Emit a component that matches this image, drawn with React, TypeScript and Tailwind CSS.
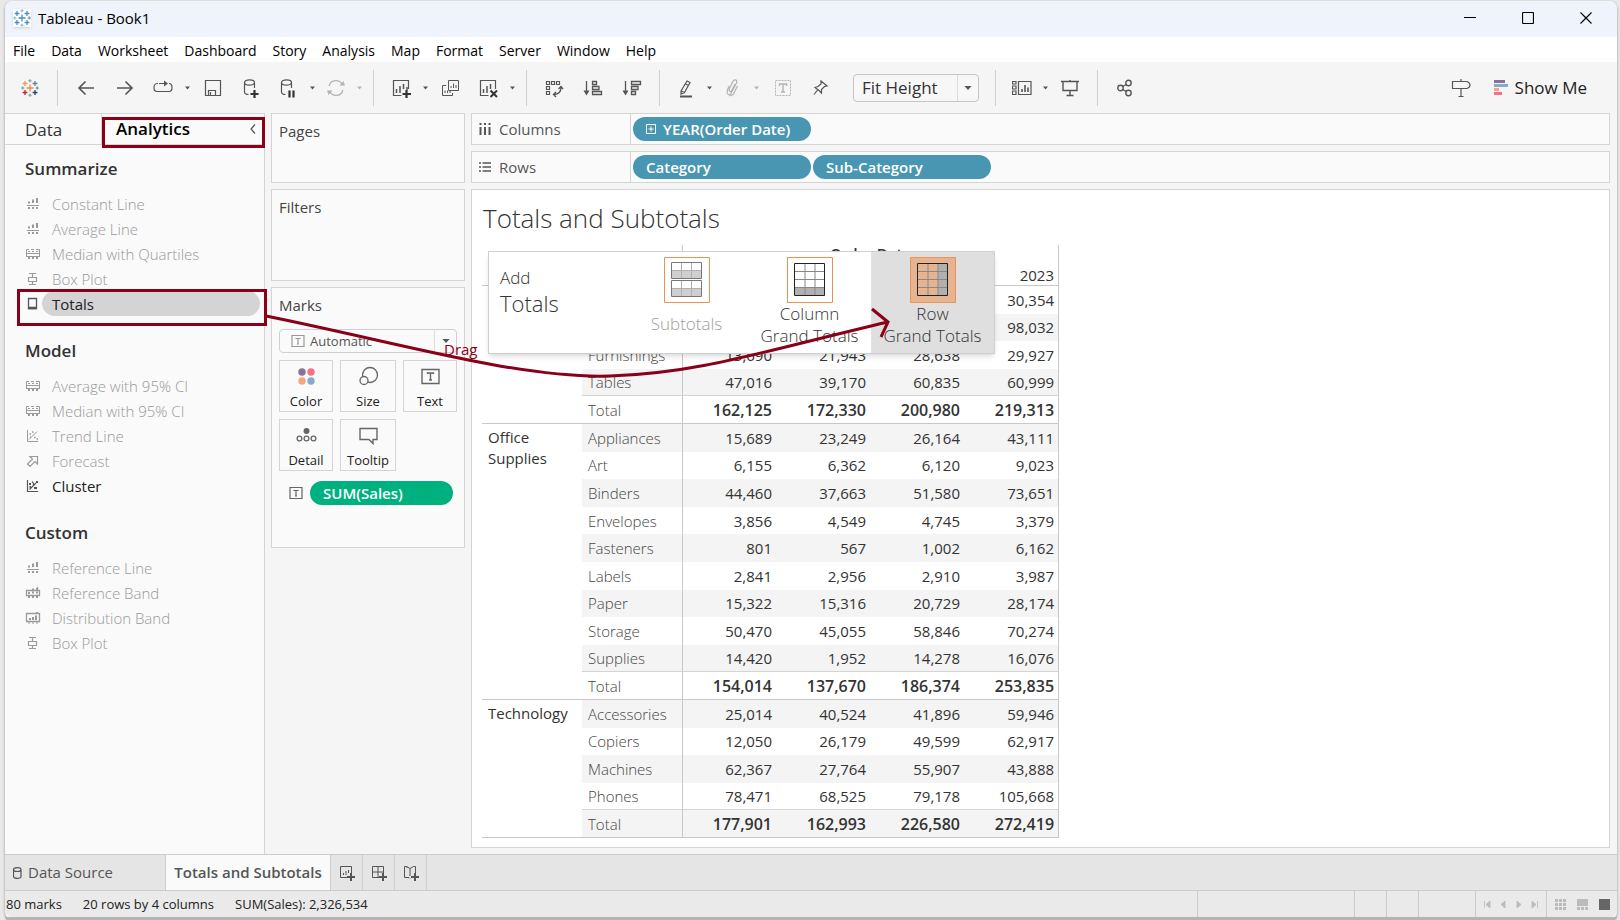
import React from "react";

type IconProps = { children: React.ReactNode; w?: number; h?: number; className?: string };

const Icon = ({ children, w = 20, h = 20, className = "" }: IconProps) => (
  <svg
    width={w}
    height={h}
    viewBox={`0 0 ${w} ${h}`}
    fill="none"
    stroke="currentColor"
    strokeWidth="1"
    className={`shrink-0 ${className}`}
    aria-hidden="true"
  >
    {children}
  </svg>
);

const Plus = ({ x, y, r, color }: { x: number; y: number; r: number; color: string }) => (
  <path d={`M${x - r} ${y}H${x + r}M${x} ${y - r}V${y + r}`} stroke={color} />
);

const Logo = ({ colors }: { colors: string[] }) => (
  <Icon w={18} h={18}>
    <g strokeWidth="1.3">
      <Plus x={9} y={9} r={3.5} color={colors[0]} />
      <Plus x={4} y={4.5} r={2.4} color={colors[1]} />
      <Plus x={14} y={4.5} r={2.4} color={colors[2]} />
      <Plus x={4} y={13.5} r={2.4} color={colors[3]} />
      <Plus x={14} y={13.5} r={2.4} color={colors[4]} />
    </g>
    <Plus x={9} y={1.8} r={1.6} color={colors[5]} />
    <Plus x={9} y={16.2} r={1.6} color={colors[5]} />
    <Plus x={1.8} y={9} r={1.6} color={colors[5]} />
    <Plus x={16.2} y={9} r={1.6} color={colors[2]} />
  </Icon>
);

type ToolProps = { label: string; muted?: boolean; narrow?: boolean; children: React.ReactNode };

const Tool = ({ label, muted, narrow, children }: ToolProps) => (
  <button
    aria-label={label}
    className={`flex h-9 shrink-0 items-center justify-center ${narrow ? "w-9" : "w-[38px]"} ${
      muted ? "text-[#b4b4b4]" : "text-[#555555]"
    }`}
  >
    {children}
  </button>
);

const Caret = ({ muted }: { muted?: boolean }) => (
  <button
    aria-label="More options"
    className={`flex h-9 w-[11px] shrink-0 items-center justify-center ${muted ? "text-[#b4b4b4]" : "text-[#555555]"}`}
  >
    <Icon w={5} h={4}>
      <path d="M0 0.5H5L2.5 3.5Z" fill="currentColor" stroke="none" />
    </Icon>
  </button>
);

const Divider = () => <div className="mx-2 h-9 w-px shrink-0 bg-[#d0d0d0]" />;

const Database = () => (
  <path d="M2.5 4.5C2.5 1 12.5 1 12.5 4.5S2.5 8 2.5 4.5V14Q2.5 16.5 6.5 16.5M12.5 4.5V10" strokeWidth="1.2" />
);

const Toolbar = () => (
  <div className="flex h-[51px] items-center bg-[#f5f5f5] pl-[6px] pr-[30px]">
    <Tool label="Start page">
      <Logo colors={["#eb8a44", "#eb9b4d", "#5b879b", "#c72037", "#1f457e", "#7199a6"]} />
    </Tool>
    <div className="flex items-center gap-px">
      <Divider />
      <Tool label="Undo">
        <Icon><path d="M18 10H3M9.500 3.500L3 10L9.500 16.500" strokeWidth="1.6" /></Icon>
      </Tool>
      <Tool label="Redo">
        <Icon><path d="M2 10H17M10.500 3.500L17 10L10.500 16.500" strokeWidth="1.6" /></Icon>
      </Tool>
      <Tool label="Replay" narrow>
        <Icon>
          <path d="M5 5.500H4C0 5.500 0 13.500 4 13.500H16C20 13.500 20 5.500 16 5.500M6 5.500H13" strokeWidth="1.2" />
          <path d="M11 2.500L15 5.500L11 8.500Z" fill="currentColor" stroke="none" />
        </Icon>
      </Tool>
      <Caret />
      <Tool label="Save">
        <Icon><path d="M2.500 2.500H17.500V17.500H2.500ZM5.500 17V12.500H12.500V17M7.500 14V17" strokeWidth="1.2" /></Icon>
      </Tool>
      <Tool label="New data source">
        <Icon>
          <Database />
          <path d="M12.500 12V20M8.500 16H16.500" stroke="#333" strokeWidth="2.200" />
        </Icon>
      </Tool>
    </div>
    <div className="flex items-center">
      <Tool label="Pause auto updates" narrow>
        <Icon>
          <Database />
          <path d="M10.500 12.500V19.500M14.500 12.500V19.500" stroke="#333" strokeWidth="2.200" />
        </Icon>
      </Tool>
      <Caret />
      <Tool label="Refresh" muted narrow>
        <Icon>
          <path d="M3 8C5 1 14 1 16.500 7M17 12C15 19 6 19 3.500 13" strokeWidth="1.300" />
          <path d="M13.500 7.500H19L17.500 3ZM6.500 12.500H1L2.500 17Z" fill="currentColor" stroke="none" />
        </Icon>
      </Tool>
      <Caret muted />
      <Divider />
      <Tool label="New worksheet">
        <Icon>
          <path d="M10.500 17.500H2.500V2.500H17.500V11" strokeWidth="1.200" />
          <path d="M5.500 15V11M9 15V8M12.500 11V6M16 12V9" strokeWidth="1.500" />
          <path d="M15.500 12V20M11.500 16H20" stroke="#333" strokeWidth="2.200" />
        </Icon>
      </Tool>
      <Caret />
      <Tool label="Duplicate">
        <Icon>
          <path d="M8.500 2.500H18.500V12.500H8.500ZM6 7.500H2.500V17.500H12.500V15" />
          <path d="M11 10V8M13.500 10V5.500M16 10V7M5 15V12.500M7.500 15V12.500M10 15V12.500" />
        </Icon>
      </Tool>
      <Tool label="Clear sheet">
        <Icon>
          <path d="M10.500 17.500H2.500V2.500H17.500V11" strokeWidth="1.200" />
          <path d="M5.500 15V11M9 15V8M12.500 11V6" strokeWidth="1.500" />
          <path d="M12.500 12.500L19 19M19 12.500L12.500 19" stroke="#333" strokeWidth="2" />
        </Icon>
      </Tool>
      <Caret />
      <Divider />
    </div>
    <div className="flex items-center gap-px">
      <Tool label="Swap rows and columns">
        <Icon>
          <path d="M2.500 3.500H5.500V6.500H2.500ZM7.500 3.500H10.500V6.500H7.500ZM12.500 3.500H15.500V6.500H12.500ZM2.500 8.500H5.500V11.500H2.500ZM2.500 13.500H5.500V16.500H2.500Z" strokeWidth="1.200" />
          <path d="M17 9.500Q17 16 10 16.500M14.500 11L17 8.500L19 11M12 14L9.500 16.500L12 19" strokeWidth="1.300" />
        </Icon>
      </Tool>
      <Tool label="Sort ascending">
        <Icon>
          <path d="M3.500 3V15M9.500 3.500H13.500V6.500H9.500ZM9.500 8.500H16V11.500H9.500ZM9.500 13.500H18.500V16.500H9.500Z" strokeWidth="1.300" />
          <path d="M0.500 12.500H6.500L3.500 17.500Z" fill="currentColor" stroke="none" />
        </Icon>
      </Tool>
      <Tool label="Sort descending">
        <Icon>
          <path d="M3.500 3V15M9.500 3.500H18.500V6.500H9.500ZM9.500 8.500H16V11.500H9.500ZM9.500 13.500H13.500V16.500H9.500Z" strokeWidth="1.300" />
          <path d="M0.500 12.500H6.500L3.500 17.500Z" fill="currentColor" stroke="none" />
        </Icon>
      </Tool>
    </div>
    <Divider />
    <div className="flex items-center">
      <Tool label="Highlight" narrow>
        <Icon>
          <path d="M5 13L11 3L14 4.500L8.500 14.500L5 16ZM5 13L8.500 14.500M9.500 6L12.500 7.500" strokeWidth="1.200" />
          <path d="M4 18.500H16" strokeWidth="2" />
        </Icon>
      </Tool>
      <Caret />
      <Tool label="Group members" muted narrow>
        <Icon>
          <path d="M6 8L4.500 12C3 17 7 18 8.500 14.500L13.500 5C15 1 11 1 9.500 4L6.500 10.500C5.500 14 8 14.500 9 12L12 6M14.500 8L11.500 14C10.500 17 8 18 6.500 17.500" strokeWidth="1.200" />
        </Icon>
      </Tool>
      <Caret muted />
    </div>
    <div className="ml-[3px] flex items-center">
      <Tool label="Show mark labels" muted narrow>
        <Icon>
          <path d="M2.500 2.500H17.500V17.500H2.500Z" strokeDasharray="2 1" />
          <path d="M6.500 8V6H13.500V8M10 6V14M8 14H12" strokeWidth="1.400" />
        </Icon>
      </Tool>
      <Tool label="Fix axes">
        <Icon>
          <path d="M11 3L17 8L14.500 8.500L11.500 11.500L11.500 15L9 12.500L5 9.500L8 8.500L11 6ZM8 11.500L4 16.500" strokeWidth="1.200" />
        </Icon>
      </Tool>
    </div>
    <div className="relative mr-2 ml-[14px] shrink-0">
      <select
        aria-label="Fit"
        className="h-7 w-[126px] appearance-none rounded-sm border border-[#c6c6c6] bg-[#f7f7f7] pl-2 text-[17px] leading-6 text-[#333333]"
      >
        <option>Fit Height</option>
      </select>
      <span className="pointer-events-none absolute inset-y-px right-px flex w-[21px] items-center justify-center border-l border-[#dcdcdc] text-[#555555]">
        <Icon w={8} h={4}><path d="M0.500 0H7.500L4 4Z" fill="currentColor" stroke="none" /></Icon>
      </span>
    </div>
    <Divider />
    <Tool label="Show cards" narrow>
      <Icon>
        <path d="M0.500 3.500H4V6H0.500ZM0.500 8H4V11H0.500ZM0.500 13H4V16.500H0.500ZM6.500 3.500H19V16.500H6.500Z" strokeWidth="1.200" />
        <path d="M10 14V11M13 14V7M16 14V9.500" strokeWidth="1.600" />
      </Icon>
    </Tool>
    <Caret />
    <Tool label="Presentation mode">
      <Icon><path d="M1 3.500H19M3 4V12.500H17V4M10 2V3M10 12.500V17.500M6.500 17.500H13.500" strokeWidth="1.400" /></Icon>
    </Tool>
    <Divider />
    <Tool label="Share">
      <Icon>
        <g strokeWidth="1.400">
          <circle cx="5.500" cy="10" r="2.700" />
          <circle cx="13.500" cy="5" r="2.700" />
          <circle cx="13.500" cy="15" r="2.700" />
          <path d="M7.800 8.500L11.300 6.500M7.800 11.500L11.300 13.500" />
        </g>
      </Icon>
    </Tool>
    <div className="ml-auto flex items-center gap-[6px]">
      <Tool label="Guide">
        <Icon><path d="M10 1V3M1.500 3.500H16C20 5 20 9 16 10.500H1.500ZM10 10.500V18.500M7.500 18.500H12.500" strokeWidth="1.200" /></Icon>
      </Tool>
      <button className="flex items-center gap-[6px] pl-2 text-[17px] leading-6 text-[#222222]">
        <Icon w={15} h={16}>
          <g stroke="none">
            <path d="M0 0H11V3H0Z" fill="#8a7099" />
            <path d="M0 4H14V7H0Z" fill="#86a9cf" />
            <path d="M0 8H5V11H0Z" fill="#f3a77d" />
            <path d="M0 12H8V15H0Z" fill="#fa7080" />
          </g>
        </Icon>
        Show Me
      </button>
    </div>
  </div>
);

const shapes: Record<string, React.ReactNode> = {
  line: (
    <>
      <path d="M3 5.500H5M7 5H9M11 4.500H13" strokeWidth="2" />
      <path d="M8 2.500V6M12 1V6" strokeWidth="2" />
      <path d="M2 8.500H14" />
      <path d="M3 11H5M7 11H9M11 11H13" strokeWidth="2" />
    </>
  ),
  median: (
    <>
      <path d="M1.500 9V2.500H4M6 2.500H9M11 2.500H14.500V9M1 6.500H15M3 4.500H5M7 4.500H9M11 4.500H13M1 9.500H15" />
      <path d="M3 11H5M7 11H9M11 11H13" strokeWidth="2" />
    </>
  ),
  box: <path d="M4 1.500H11M7.500 2V5M3.500 5.500H11.500V9.500H3.500ZM7.500 10V12.500M4 12.500H11" strokeWidth="1.200" />,
  totals: (
    <>
      <path d="M3.500 1.500H11.500V11.500H3.500Z" strokeWidth="1.300" />
      <path d="M3 11H12" strokeWidth="2.500" />
    </>
  ),
  trend: (
    <>
      <path d="M2.500 1V12.500H13M4 10.500L12 2.500" />
      <path d="M4.500 5H6M7 3H8.500M9 8.500H10.500M11.500 10H13M5 8H6" strokeWidth="1.500" />
    </>
  ),
  forecast: <path d="M5 2.500H12.500V10L10 7.500L5 12.500L2.500 10L7.500 5Z" strokeWidth="1.200" />,
  cluster: (
    <>
      <path d="M2.500 1V12.500H13M4.500 10.500L11 4M7 2.500Q9 4 8.500 6" strokeWidth="1.200" />
      <path d="M4 5H6M4.500 8H6M9 9H12M11 3H13" strokeWidth="1.800" />
    </>
  ),
  band: (
    <>
      <path d="M1.500 4.500H14.500V9.500H1.500ZM12.500 1V4" strokeWidth="1.300" />
      <path d="M3 7H5M7 6.500H9M11 6.500H13M3 11H5M7 11H9M11 11H13M7 3.500H9M11 3H13" strokeWidth="2" />
    </>
  ),
  dist: (
    <>
      <path d="M1.500 2.500H14.500V10.500H1.500Z" strokeWidth="1.300" />
      <path d="M5 9V7M8 9V6M11 9V4.500" strokeWidth="2" />
      <path d="M3 12H5M7 12H9M11 12H13M11 1.500H13" />
    </>
  ),
};

const groups = [
  {
    title: "Summarize",
    items: [
      ["line", "Constant Line"],
      ["line", "Average Line"],
      ["median", "Median with Quartiles"],
      ["box", "Box Plot"],
      ["totals", "Totals"],
    ],
  },
  {
    title: "Model",
    items: [
      ["median", "Average with 95% CI"],
      ["median", "Median with 95% CI"],
      ["trend", "Trend Line"],
      ["forecast", "Forecast"],
      ["cluster", "Cluster"],
    ],
  },
  {
    title: "Custom",
    items: [
      ["line", "Reference Line"],
      ["band", "Reference Band"],
      ["dist", "Distribution Band"],
      ["box", "Box Plot"],
    ],
  },
];

const Sidebar = () => (
  <aside className="w-[260px] shrink-0 border-r border-[#d4d4d4] bg-[#fafafa]">
    <div className="flex h-8 border-y border-[#d4d4d4]">
      <button className="w-[97px] border-r border-[#d4d4d4] pl-5 text-left text-[17px] leading-8 text-[#333333]">
        Data
      </button>
      <button className="flex flex-1 items-center justify-between pl-[14px] pr-2 text-[17px] font-semibold text-black">
        Analytics
        <Icon w={6} h={10} className="text-[#555555]"><path d="M5 0.500L1 5L5 9.500" strokeWidth="1.200" /></Icon>
      </button>
    </div>
    <div className="flex flex-col gap-[22px] pt-[11px]">
      {groups.map((group) => (
        <section key={group.title} className="flex flex-col gap-[9px]">
          <h2 className="pl-5 text-[17px] leading-[26px] font-semibold text-[#333333]">{group.title}</h2>
          <ul>
            {group.items.map(([icon, name]) => {
              const selected = name === "Totals";
              const active = selected || name === "Cluster";
              return (
                <li key={name} className="flex h-[25px] items-center gap-px pl-5 pr-1">
                  <Icon w={16} h={14} className={active ? "text-[#555555]" : "text-[#9a9a9a]"}>
                    {shapes[icon]}
                  </Icon>
                  <button
                    className={`h-[25px] flex-1 rounded-full pl-[10px] text-left text-[15px] leading-6 ${
                      selected ? "bg-[#d4d4d4]" : ""
                    } ${active ? "text-[#222222]" : "font-light text-[#999999]"}`}
                  >
                    {name}
                  </button>
                </li>
              );
            })}
          </ul>
        </section>
      ))}
    </div>
  </aside>
);

const marks = [
  {
    label: "Color",
    width: "w-[54px]",
    icon: (
      <g stroke="none">
        <circle cx="6" cy="6" r="3.700" fill="#8a7099" />
        <circle cx="15" cy="6" r="3.700" fill="#fa7080" />
        <circle cx="6" cy="15" r="3.700" fill="#f3a77d" />
        <circle cx="15" cy="15" r="3.700" fill="#86a9cf" />
      </g>
    ),
  },
  {
    label: "Size",
    width: "w-[56px]",
    icon: (
      <g strokeWidth="1.300">
        <circle cx="12" cy="9" r="7.500" />
        <circle cx="6" cy="14.500" r="4" fill="#fafafa" />
      </g>
    ),
  },
  {
    label: "Text",
    width: "w-[54px]",
    icon: <path d="M2 3.500H19V17.500H2ZM7.500 8V7H13.500V8M10.500 7V14M9 14H12" strokeWidth="1.400" />,
  },
  {
    label: "Detail",
    width: "w-[54px]",
    icon: (
      <g strokeWidth="1.300">
        <circle cx="10.500" cy="6" r="3" fill="currentColor" stroke="none" />
        <circle cx="3.500" cy="13.500" r="2.400" />
        <circle cx="10.500" cy="13.500" r="2.400" />
        <circle cx="17.500" cy="13.500" r="2.400" />
      </g>
    ),
  },
  {
    label: "Tooltip",
    width: "w-[56px]",
    icon: <path d="M2 3.500H19V14.500H15V18.500L11 14.500H2Z" strokeWidth="1.400" />,
  },
];

const TextMark = ({ className }: { className: string }) => (
  <Icon w={14} h={12} className={className}>
    <path d="M1 0.500H13V11.500H1ZM5 4V3.500H9V4M7 3.500V9M6 9H8" strokeWidth="1.200" />
  </Icon>
);

const Cards = () => (
  <div className="flex w-[206px] shrink-0 flex-col gap-[6px] px-[6px]">
    <section className="h-[70px] border border-[#d4d4d4] bg-[#fafafa] px-[7px] py-[5px]">
      <h3 className="text-[15px] leading-6 text-[#444444]">Pages</h3>
    </section>
    <section className="h-[92px] border border-[#d4d4d4] bg-[#fafafa] px-[7px] py-[5px]">
      <h3 className="text-[15px] leading-6 text-[#444444]">Filters</h3>
    </section>
    <section className="h-[261px] border border-[#d4d4d4] bg-[#fafafa] px-[7px] py-[5px]">
      <h3 className="text-[15px] leading-6 text-[#444444]">Marks</h3>
      <div className="relative mt-3">
        <TextMark className="absolute left-3 top-[6px] text-[#999999]" />
        <select
          aria-label="Mark type"
          className="block h-6 w-full appearance-none rounded-sm border border-[#d0d0d0] bg-transparent pl-[30px] text-[13px] leading-5 text-[#555555]"
        >
          <option>Automatic</option>
        </select>
        <span className="pointer-events-none absolute inset-y-px right-px flex w-[22px] items-center justify-center border-l border-[#dcdcdc] text-[#555555]">
          <Icon w={8} h={4}><path d="M0.500 0H7.500L4 4Z" fill="currentColor" stroke="none" /></Icon>
        </span>
      </div>
      <div className="mt-[7px] flex flex-wrap gap-[7px]">
        {marks.map((mark) => (
          <button
            key={mark.label}
            className={`flex h-[52px] flex-col items-center justify-between border border-[#d4d4d4] pt-[5px] text-[#666666] ${mark.width}`}
          >
            <Icon w={21} h={21}>{mark.icon}</Icon>
            <span className="text-[13px] leading-5 text-[#222222]">{mark.label}</span>
          </button>
        ))}
      </div>
      <div className="mt-[10px] flex items-center gap-[7px] pl-[10px] pr-1">
        <TextMark className="text-[#666666]" />
        <button className="h-6 flex-1 rounded-full bg-[#00b180] pl-[13px] text-left text-[15px] leading-6 font-semibold text-white">
          SUM(Sales)
        </button>
      </div>
    </section>
  </div>
);

const Pill = ({ children, plus }: { children: React.ReactNode; plus?: boolean }) => (
  <button className="flex h-6 w-[178px] items-center gap-[7px] rounded-full bg-[#4996b2] pl-[13px] text-[15px] leading-6 font-semibold text-white">
    {plus && <Icon w={10} h={10}><path d="M0.500 0.500H9.500V9.500H0.500ZM5 2.500V7.500M2.500 5H7.500" /></Icon>}
    {children}
  </button>
);

const Shelf = ({ label, icon, children }: { label: string; icon: React.ReactNode; children: React.ReactNode }) => (
  <div className="flex h-8 border border-[#d4d4d4] bg-[#fafafa]">
    <div className="flex w-[159px] items-center gap-2 border-r border-[#d4d4d4] pl-[7px] text-[15px] leading-6 text-[#555555]">
      <Icon w={12} h={12}>{icon}</Icon>
      {label}
    </div>
    <div className="flex items-center gap-[2px] pl-[2px]">{children}</div>
  </div>
);

const data = [
  {
    category: "",
    rows: [
      ["", "", "", "", "30,354"],
      ["", "", "", "", "98,032"],
      ["Furnishings", "13,690", "21,943", "28,638", "29,927"],
      ["Tables", "47,016", "39,170", "60,835", "60,999"],
      ["Total", "162,125", "172,330", "200,980", "219,313"],
    ],
  },
  {
    category: "Office Supplies",
    rows: [
      ["Appliances", "15,689", "23,249", "26,164", "43,111"],
      ["Art", "6,155", "6,362", "6,120", "9,023"],
      ["Binders", "44,460", "37,663", "51,580", "73,651"],
      ["Envelopes", "3,856", "4,549", "4,745", "3,379"],
      ["Fasteners", "801", "567", "1,002", "6,162"],
      ["Labels", "2,841", "2,956", "2,910", "3,987"],
      ["Paper", "15,322", "15,316", "20,729", "28,174"],
      ["Storage", "50,470", "45,055", "58,846", "70,274"],
      ["Supplies", "14,420", "1,952", "14,278", "16,076"],
      ["Total", "154,014", "137,670", "186,374", "253,835"],
    ],
  },
  {
    category: "Technology",
    rows: [
      ["Accessories", "25,014", "40,524", "41,896", "59,946"],
      ["Copiers", "12,050", "26,179", "49,599", "62,917"],
      ["Machines", "62,367", "27,764", "55,907", "43,888"],
      ["Phones", "78,471", "68,525", "79,178", "105,668"],
      ["Total", "177,901", "162,993", "226,580", "272,419"],
    ],
  },
];

const Crosstab = () => (
  <table className="h-[593px] w-[577px] table-fixed border-separate border-spacing-0 text-[15px] leading-5">
    <colgroup>
      <col className="w-[100px]" />
      <col className="w-[101px]" />
      <col className="w-[94px]" />
      <col className="w-[94px]" />
      <col className="w-[94px]" />
      <col className="w-[94px]" />
    </colgroup>
    <thead className="text-[#333333]">
      <tr className="h-5">
        <th colSpan={2} className="border-r border-[#c8c8c8] p-0" />
        <th colSpan={4} className="border-r border-[#c8c8c8] p-0 align-top leading-4 font-semibold">Order Date</th>
      </tr>
      <tr className="h-[21px]">
        <th colSpan={2} className="border-r border-b border-[#c8c8c8] p-0" />
        <th colSpan={3} className="border-b border-[#c8c8c8] p-0" />
        <th className="border-r border-b border-[#c8c8c8] py-0 pr-1 text-right font-medium">2023</th>
      </tr>
    </thead>
    {data.map((group, g) => (
      <tbody key={g}>
        {group.rows.map((row, i) => {
          const last = i === group.rows.length - 1;
          // banding runs on through all of the groups
          const banded = (g === 0 ? i : i + 1) % 2 === 1;
          const line = last
            ? "border-b border-b-[#c8c8c8]"
            : i === group.rows.length - 2
              ? "border-b border-b-[#d4d4d4]"
              : "";
          const shade = banded ? "bg-[#f4f4f4]" : "";
          return (
            <tr key={i} className="h-[27px]">
              {i === 0 && (
                <th
                  rowSpan={group.rows.length}
                  className="border-b border-[#c8c8c8] py-[3px] pr-4 pl-[6px] text-left align-top leading-[21px] font-medium text-[#333333]"
                >
                  {group.category}
                </th>
              )}
              <th className={`border-r border-r-[#c8c8c8] py-0 pl-[6px] text-left font-light text-[#444444] ${line} ${shade}`}>
                {row[0]}
              </th>
              {row.slice(1).map((value, c) => (
                <td
                  key={c}
                  className={`py-0 text-right text-[#333333] ${last ? "text-base leading-5 font-semibold" : ""} ${
                    c === 3 ? "border-r border-r-[#c8c8c8] pr-1" : "pr-[5px]"
                  } ${line} ${shade}`}
                >
                  {value}
                </td>
              ))}
            </tr>
          );
        })}
      </tbody>
    ))}
  </table>
);

const TotalsDrop = () => (
  <div className="absolute top-[61px] left-4 flex h-[103px] w-[507px] border border-[#d0d0d0] bg-white text-[#333333] shadow-md">
    <div className="w-[136px] pt-[15px] pl-[11px] font-light">
      <div className="text-[17px] leading-[22px]">Add</div>
      <div className="text-[22px] leading-7">Totals</div>
    </div>
    <button className="flex w-[123px] flex-col items-center gap-[10px] pt-[5px] text-[#a0a0a0]">
      <Icon w={46} h={46}>
        <path d="M0.500 0.500H45.500V45.500H0.500Z" stroke="#eb9355" />
        <path d="M8 13.500H37V21H8ZM8 31.500H37V39H8Z" fill="#cfcfcf" stroke="none" />
        <path d="M17.500 6V21M27.500 6V21M17.500 24V39M27.500 24V39M8 13.500H37M8 31.500H37" stroke="#b0b0b0" />
        <path d="M7.500 5.500H37.500V21.500H7.500ZM7.500 23.500H37.500V39.500H7.500Z" stroke="#777777" />
      </Icon>
      <span className="text-[17px] leading-[22px] font-light">Subtotals</span>
    </button>
    <button className="flex w-[123px] flex-col items-center pt-[5px]">
      <Icon w={46} h={46}>
        <path d="M0.500 0.500H45.500V45.500H0.500Z" stroke="#eb9355" />
        <path d="M8 31H38V39H8Z" fill="#b0b0b0" stroke="none" />
        <path d="M18 6V39M28 6V39M8 14.500H38M8 22.500H38M8 30.500H38" stroke="#888888" />
        <path d="M7.500 6.500H37.500V38.500H7.500Z" stroke="#222222" />
      </Icon>
      <span className="w-full text-[17px] leading-[22px] font-light">
        Column
        <br />
        Grand Totals
      </span>
    </button>
    <button className="flex w-[123px] flex-col items-center bg-[#dfdfdf] pt-[5px]">
      <Icon w={46} h={46}>
        <path d="M0.500 0.500H45.500V45.500H0.500Z" fill="#e7b492" stroke="#eb9355" />
        <path d="M28 6H38V39H28Z" fill="#b0b0b0" stroke="none" />
        <path d="M18 6V39M28 6V39M8 14.500H38M8 22.500H38M8 30.500H38" stroke="#888888" />
        <path d="M7.500 6.500H37.500V38.500H7.500Z" stroke="#222222" />
      </Icon>
      <span className="w-full text-[17px] leading-[22px] font-light">
        Row
        <br />
        Grand Totals
      </span>
    </button>
  </div>
);

const SheetTabs = () => (
  <div className="flex h-[37px] border-y border-[#cccccc] bg-[#e5e5e5] text-[#555555]">
    <button className="flex w-[161px] items-center gap-[6px] border-r border-[#cccccc] pl-2 text-[15px]">
      <Icon w={9} h={12}><path d="M0.500 2.500C0.500 0 8 0 8 2.500V9.500C8 12 0.500 12 0.500 9.500ZM0.500 3C1 5 7.500 5 8 3" strokeWidth="1.200" /></Icon>
      Data Source
    </button>
    <button className="w-[165px] border-r border-[#cccccc] bg-[#fafafa] text-[15px] font-semibold">
      Totals and Subtotals
    </button>
    <button aria-label="New worksheet" className="flex w-8 items-center justify-center border-r border-[#cccccc]">
      <Icon w={16} h={16}>
        <path d="M9 12.500H1.500V1.500H12.500V8M4.500 10V8M7 10V6M9.500 8V5" />
        <path d="M12 8V16M8 12H16" strokeWidth="2" />
      </Icon>
    </button>
    <button aria-label="New dashboard" className="flex w-8 items-center justify-center border-r border-[#cccccc]">
      <Icon w={16} h={16}>
        <path d="M9 12.500H1.500V1.500H12.500V8M1 7H12M7 1.500V12" />
        <path d="M12 8V16M8 12H16" strokeWidth="2" />
      </Icon>
    </button>
    <button aria-label="New story" className="flex w-8 items-center justify-center border-r border-[#cccccc]">
      <Icon w={16} h={16}>
        <path d="M7 13.500L6 12.500H1.500V1.500H3.500L7 3.500L10.500 1.500H12.500V8M7 3.500V11M4 1.500V3" />
        <path d="M12 8V16M8 12H16" strokeWidth="2" />
      </Icon>
    </button>
  </div>
);

const StatusBar = () => (
  <div className="flex h-[26px] rounded-b-lg bg-[#eaeaea] text-[13px] leading-[26px] text-[#222222]">
    <div className="flex flex-1 gap-[21px] pl-px">
      <span>80 marks</span>
      <span>20 rows by 4 columns</span>
      <span>SUM(Sales): 2,326,534</span>
    </div>
    <div className="w-[157px] border-l border-[#cccccc]" />
    <div className="w-8 border-l border-[#cccccc]" />
    <div className="w-8 border-l border-[#cccccc]" />
    <div className="w-[57px] border-l border-[#cccccc]" />
    <div className="flex w-[71px] items-center justify-center border-l border-[#cccccc] text-[#bbbbbb]">
      {[
        ["First", "M5.500 3V10M11 3V10L7 6.500Z"],
        ["Previous", "M10 3V10L6 6.500Z"],
        ["Next", "M6 3V10L10 6.500Z"],
        ["Last", "M10.500 3V10M5 3V10L9 6.500Z"],
      ].map(([label, d]) => (
        <button key={label} aria-label={label}>
          <Icon w={16} h={13}><path d={d} fill="currentColor" strokeWidth="0.800" /></Icon>
        </button>
      ))}
    </div>
    <div className="flex w-[71px] items-center gap-[11px] border-l border-[#cccccc] pl-2 text-[#bbbbbb]">
      <button aria-label="Sheet sorter">
        <Icon w={11} h={11}><path d="M0 1.500H11M0 5.500H11M0 9.500H11" strokeWidth="3" strokeDasharray="3 1" /></Icon>
      </button>
      <button aria-label="Filmstrip">
        <Icon w={11} h={11}>
          <path d="M0 3.500H11" strokeWidth="7" />
          <path d="M0 9.500H11" strokeWidth="3" strokeDasharray="3 1" />
        </Icon>
      </button>
      <button aria-label="Tabs" className="h-[11px] w-[11px] bg-[#666666]" />
    </div>
  </div>
);

// red boxes and the drag arrow that explain where Totals is dropped
const Annotations = () => (
  <div className="pointer-events-none absolute inset-0 text-[#8a0018]">
    <svg width="900" height="400" viewBox="0 0 900 400" fill="none" stroke="currentColor" strokeWidth="3">
      <path d="M103.500 118.500H263.500V146.500H103.500ZM18.500 290.500H265.500V324.500H18.500Z" />
      <path d="M266 316C400 343 520 379 610 376S760 352 888 322M872 309L888 322L881 337" />
    </svg>
    <span className="absolute top-[337px] left-[444px] text-[15px] leading-6">Drag</span>
  </div>
);

const menus = [
  "File", "Data", "Worksheet", "Dashboard", "Story", "Analysis",
  "Map", "Format", "Server", "Window", "Help",
];

const App = () => {
  return (
    <div className="relative flex min-h-screen flex-col bg-[#e9e9e9] pt-px pr-[3px] pl-[5px] font-['Open_Sans',sans-serif]">
      <div className="flex flex-1 flex-col rounded-lg bg-[#f5f5f5] shadow-sm shadow-[#999999]">
        <header className="flex h-9 items-center rounded-t-lg bg-[#eff3fb] pr-[25px] pb-[2px] pl-2">
          <span className="flex h-[18px] w-[18px] items-center justify-center bg-white shadow-sm">
            <Logo colors={["#4a8fbb", "#4a8fbb", "#4a8fbb", "#4a8fbb", "#4a8fbb", "#7fb2d2"]} />
          </span>
          <h1 className="ml-[7px] text-[15px] leading-5 text-black">Tableau - Book1</h1>
          <div className="ml-auto flex gap-[46px] text-black">
            <button aria-label="Minimize"><Icon w={12} h={12}><path d="M0 5.500H12" /></Icon></button>
            <button aria-label="Maximize"><Icon w={12} h={12}><rect x="0.500" y="0.500" width="11" height="11" rx="1" strokeWidth="1.200" /></Icon></button>
            <button aria-label="Close"><Icon w={12} h={12}><path d="M0.500 0.500L11.500 11.500M11.500 0.500L0.500 11.500" strokeWidth="1.200" /></Icon></button>
          </div>
        </header>
        <nav className="flex h-[25px] items-center gap-4 bg-white pt-[2px] pl-2 text-[14px] text-black">
          {menus.map((menu) => (
            <button key={menu}>{menu}</button>
          ))}
        </nav>
        <Toolbar />
        <div className="flex flex-1">
          <Sidebar />
          <Cards />
          <main className="flex flex-1 flex-col gap-[6px] pr-[7px] pb-[6px]">
            <Shelf label="Columns" icon={<path d="M1.500 4V12M6 4V12M10.500 4V12M1.500 0V2M6 0V2M10.500 0V2" strokeWidth="2" />}>
              <Pill plus>YEAR(Order Date)</Pill>
            </Shelf>
            <Shelf label="Rows" icon={<path d="M0 2H2M3.500 2H12M0 6H2M3.500 6H12M0 10H2M3.500 10H12" strokeWidth="1.600" />}>
              <Pill>Category</Pill>
              <Pill>Sub-Category</Pill>
            </Shelf>
            <div className="relative flex-1 border border-[#d4d4d4] bg-white pl-[10px]">
              <h2 className="pt-3 pb-[10px] pl-px text-[26px] leading-[33px] font-light text-[#333333]">
                Totals and Subtotals
              </h2>
              <Crosstab />
              <TotalsDrop />
            </div>
          </main>
        </div>
        <SheetTabs />
        <StatusBar />
        <div className="h-[3px] rounded-b-lg bg-[#b4b4b4]" />
      </div>
      <Annotations />
    </div>
  );
};

export default App;
